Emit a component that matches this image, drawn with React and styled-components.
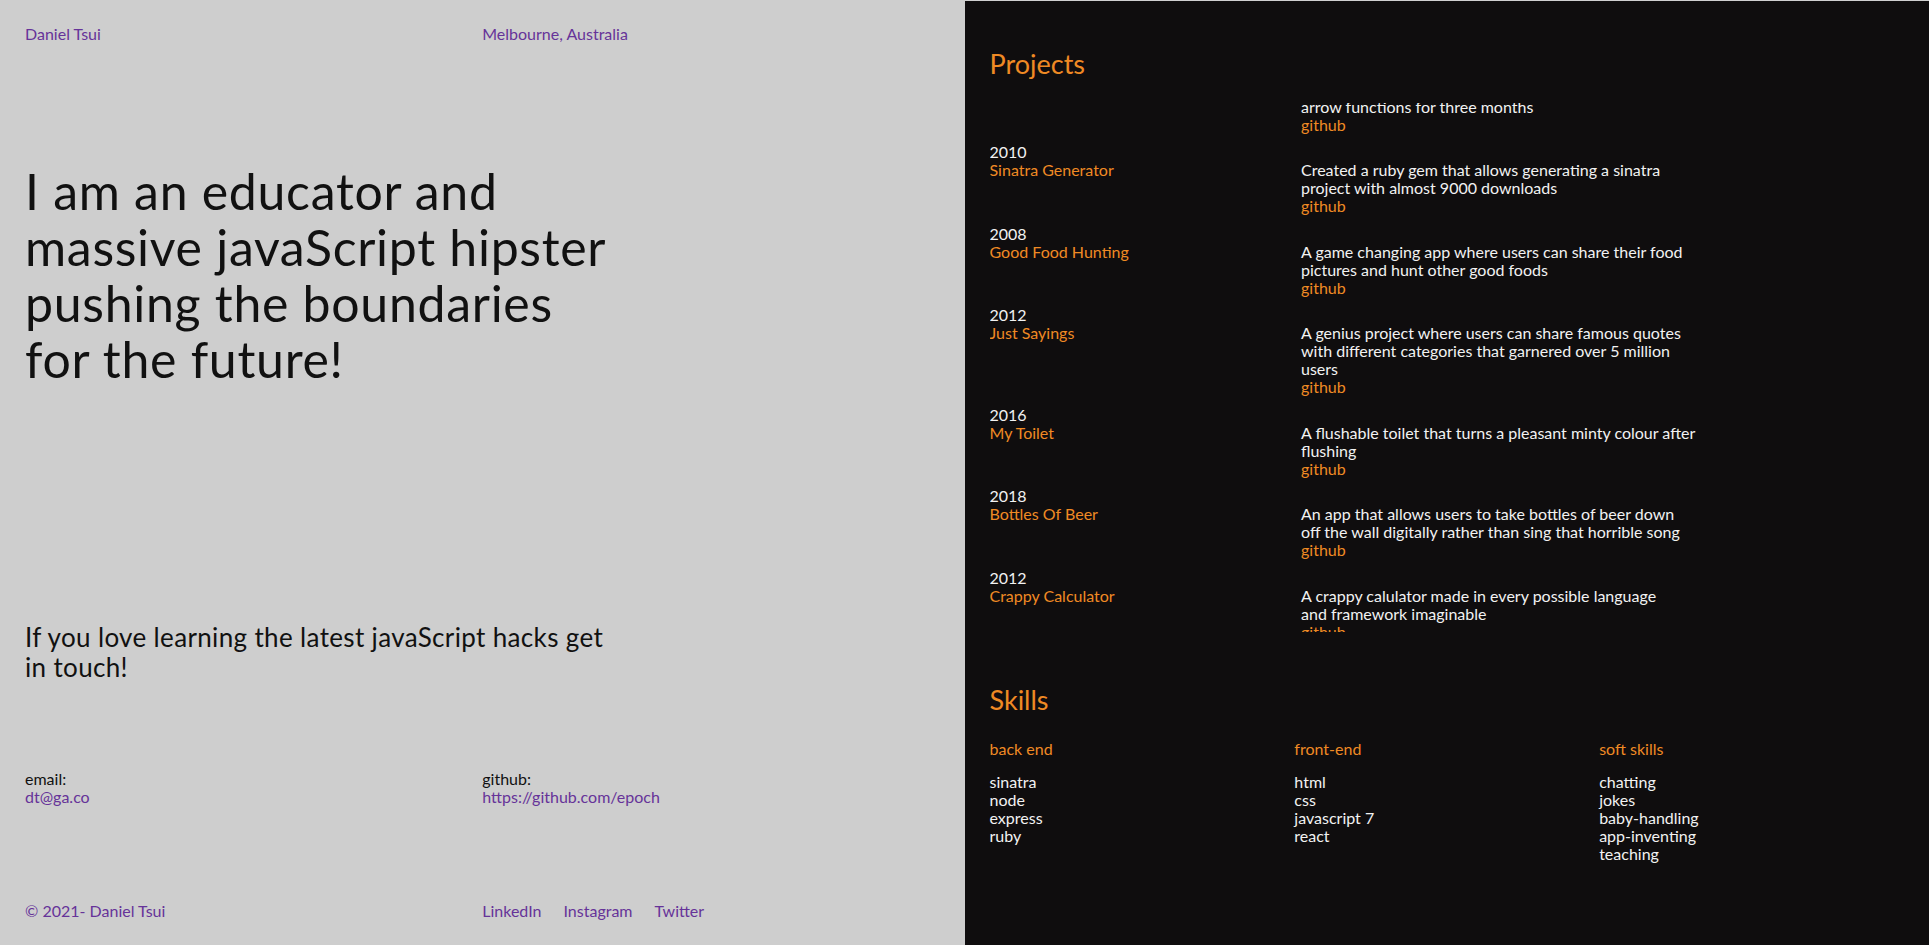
import React, { useLayoutEffect, useRef } from "react";
import styled, { createGlobalStyle } from "styled-components";

const PURPLE = "#663399";
const ORANGE = "#ef8a24";

const projects = [
  {
    year: "2019",
    title: "Hipster Ipsum",
    lines: ["A lorem ipsum generator that only speaks in", "craft beer and vinyl records"],
  },
  {
    year: "2015",
    title: "Fat Arrow Club",
    lines: ["A secret society of developers who only wrote", "arrow functions for three months"],
  },
  {
    year: "2010",
    title: "Sinatra Generator",
    lines: ["Created a ruby gem that allows generating a sinatra", "project with almost 9000 downloads"],
  },
  {
    year: "2008",
    title: "Good Food Hunting",
    lines: ["A game changing app where users can share their food", "pictures and hunt other good foods"],
  },
  {
    year: "2012",
    title: "Just Sayings",
    lines: [
      "A genius project where users can share famous quotes",
      "with different categories that garnered over 5 million",
      "users",
    ],
  },
  {
    year: "2016",
    title: "My Toilet",
    lines: ["A flushable toilet that turns a pleasant minty colour after", "flushing"],
  },
  {
    year: "2018",
    title: "Bottles Of Beer",
    lines: ["An app that allows users to take bottles of beer down", "off the wall digitally rather than sing that horrible song"],
  },
  {
    year: "2012",
    title: "Crappy Calculator",
    lines: ["A crappy calulator made in every possible language", "and framework imaginable"],
  },
];

const skills = [
  { name: "back end", items: ["sinatra", "node", "express", "ruby"] },
  { name: "front-end", items: ["html", "css", "javascript 7", "react"] },
  { name: "soft skills", items: ["chatting", "jokes", "baby-handling", "app-inventing", "teaching"] },
];

const App = () => {
  const listRef = useRef(null);

  // the list is shown part way scrolled
  useLayoutEffect(() => {
    if (listRef.current) listRef.current.scrollTop = 123;
  }, []);

  return (
    <>
      <GlobalStyle />
      <Page>
        <Intro>
          <TwoCol>
            <Link href="#">Daniel Tsui</Link>
            <Link href="#">Melbourne, Australia</Link>
          </TwoCol>
          <Headline>
            I am an educator and
            <br />
            massive javaScript hipster
            <br />
            pushing the boundaries
            <br />
            for the future!
          </Headline>
          <Lead>
            If you love learning the latest javaScript hacks get
            <br />
            in touch!
          </Lead>
          <Contacts>
            <div>
              <Label>email:</Label>
              <Link href="#">dt@ga.co</Link>
            </div>
            <div>
              <Label>github:</Label>
              <Link href="#">https://github.com/epoch</Link>
            </div>
          </Contacts>
          <Footer>
            <Link href="#">© 2021- Daniel Tsui</Link>
            <Socials>
              <Link href="#">LinkedIn</Link>
              <Link href="#">Instagram</Link>
              <Link href="#">Twitter</Link>
            </Socials>
          </Footer>
        </Intro>

        <Work>
          <SectionTitle>Projects</SectionTitle>
          <ProjectList ref={listRef}>
            {projects.map((p, idx) => (
              <Project key={idx}>
                <Year>{p.year}</Year>
                <ProjectRow>
                  <ProjectName>{p.title}</ProjectName>
                  <Desc>
                    {p.lines.map((line, i) => (
                      <React.Fragment key={i}>
                        {line}
                        <br />
                      </React.Fragment>
                    ))}
                    <OrangeLink href="#">github</OrangeLink>
                  </Desc>
                </ProjectRow>
              </Project>
            ))}
          </ProjectList>

          <SkillsTitle>Skills</SkillsTitle>
          <SkillGrid>
            {skills.map((group) => (
              <div key={group.name}>
                <SkillHead>{group.name}</SkillHead>
                <SkillList>
                  {group.items.map((s) => (
                    <li key={s}>{s}</li>
                  ))}
                </SkillList>
              </div>
            ))}
          </SkillGrid>
        </Work>
      </Page>
    </>
  );
};

const GlobalStyle = createGlobalStyle`
  * {
    box-sizing: border-box;
  }
  body {
    margin: 0;
    font-family: Lato, "Open Sans", sans-serif;
    font-size: 16px;
    line-height: 18px;
  }
`;

const Page = styled.div`
  display: grid;
  grid-template-columns: 1fr 1fr;
  height: 945px;
  overflow: hidden;
`;

const Intro = styled.section`
  background: #cecece;
  color: #111;
  padding: 25px;
  display: flex;
  flex-direction: column;
`;

const TwoCol = styled.div`
  display: grid;
  grid-template-columns: 1fr 1fr;
`;

const Link = styled.a`
  color: ${PURPLE};
  text-decoration: none;
  display: block;
`;

const Headline = styled.h1`
  margin: 120px 0 0;
  font-size: 50px;
  line-height: 56px;
  font-weight: 400;
  letter-spacing: 0.7px;
`;

const Lead = styled.p`
  margin: 235px 0 0;
  font-size: 26px;
  line-height: 30px;
  letter-spacing: 0.35px;
`;

const Contacts = styled(TwoCol)`
  margin-top: 88px;
`;

const Label = styled.div`
  color: #111;
`;

const Footer = styled(TwoCol)`
  margin-top: auto;
`;

const Socials = styled.div`
  display: flex;
  gap: 22px;
`;

const Work = styled.section`
  background: #0f0d0e;
  color: #f2f2f2;
  padding: 50px 25px 0;
  box-shadow: inset 0 1px 0 #d0d0d0;
`;

const SectionTitle = styled.h2`
  margin: 0 0 25px;
  color: ${ORANGE};
  font-size: 27px;
  line-height: 28px;
  font-weight: 400;
`;

const ProjectList = styled.div`
  height: 529px;
  overflow-y: auto;
  scrollbar-width: none;
  &::-webkit-scrollbar {
    display: none;
  }
`;

const Project = styled.div`
  margin-bottom: 9.5px;
`;

const Year = styled.div``;

const ProjectRow = styled.div`
  display: grid;
  grid-template-columns: 1fr 2fr;
  column-gap: 10px;
`;

const ProjectName = styled.div`
  color: ${ORANGE};
`;

const Desc = styled.div``;

const OrangeLink = styled.a`
  color: ${ORANGE};
  text-decoration: none;
`;

const SkillsTitle = styled(SectionTitle)`
  margin: 54px 0 26px;
`;

const SkillGrid = styled.div`
  display: grid;
  grid-template-columns: repeat(3, 1fr);
`;

const SkillHead = styled.h3`
  margin: 0 0 15px;
  color: ${ORANGE};
  font-size: 16px;
  line-height: 18px;
  font-weight: 400;
`;

const SkillList = styled.ul`
  list-style: none;
  margin: 0;
  padding: 0;
`;

export default App;
